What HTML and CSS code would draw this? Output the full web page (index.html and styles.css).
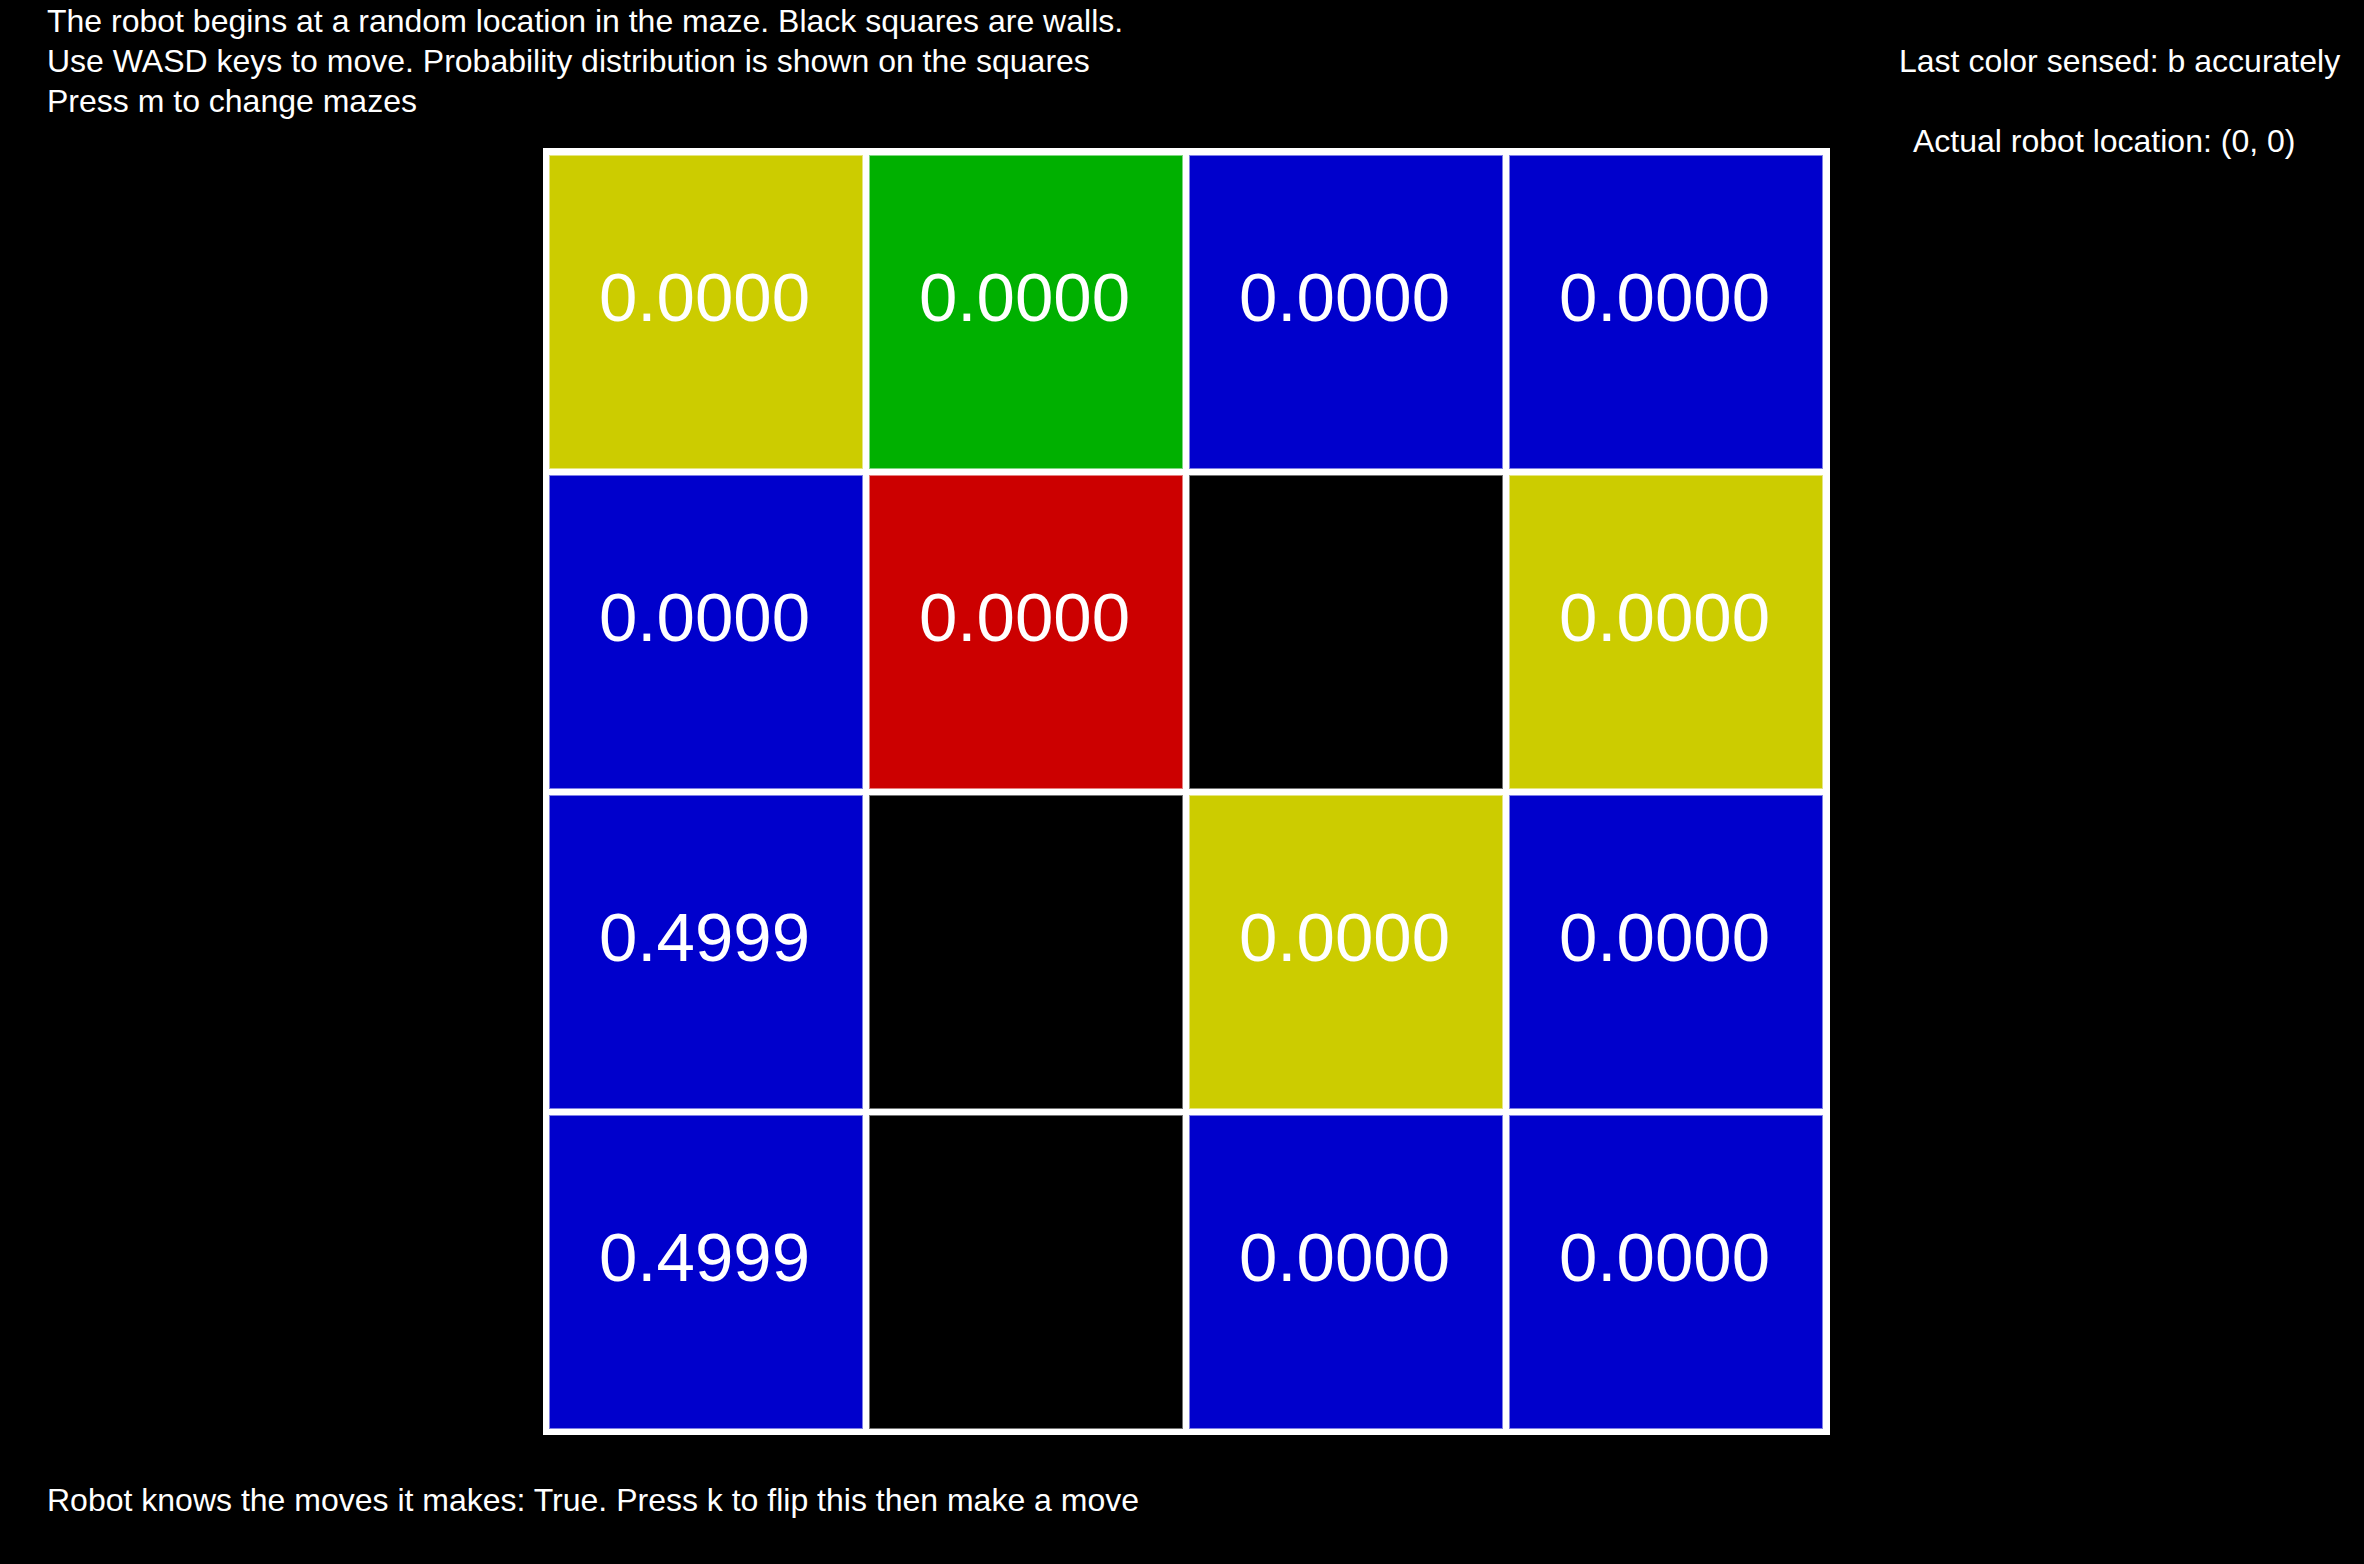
FILE: index.html
```html
<!DOCTYPE html>
<html>
<head>
<meta charset="utf-8">
<title>Maze Localization</title>
<link rel="stylesheet" href="styles.css">
</head>
<body>
<div class="page">
  <div class="main">
    <div class="intro">
      <div class="line">The robot begins at a random location in the maze. Black squares are walls.</div>
      <div class="line">Use WASD keys to move. Probability distribution is shown on the squares</div>
      <div class="line">Press m to change mazes</div>
    </div>
    <div class="maze">
      <div class="cell yellow"><span class="prob">0.0000</span></div>
      <div class="cell green"><span class="prob">0.0000</span></div>
      <div class="cell blue"><span class="prob">0.0000</span></div>
      <div class="cell blue"><span class="prob">0.0000</span></div>

      <div class="cell blue"><span class="prob">0.0000</span></div>
      <div class="cell red"><span class="prob">0.0000</span></div>
      <div class="cell wall"></div>
      <div class="cell yellow"><span class="prob">0.0000</span></div>

      <div class="cell blue"><span class="prob">0.4999</span></div>
      <div class="cell wall"></div>
      <div class="cell yellow"><span class="prob">0.0000</span></div>
      <div class="cell blue"><span class="prob">0.0000</span></div>

      <div class="cell blue"><span class="prob">0.4999</span></div>
      <div class="cell wall"></div>
      <div class="cell blue"><span class="prob">0.0000</span></div>
      <div class="cell blue"><span class="prob">0.0000</span></div>
    </div>
    <div class="footer">Robot knows the moves it makes: True. Press k to flip this then make a move</div>
  </div>
  <div class="info">
    <div class="line sensed">Last color sensed: b accurately</div>
    <div class="line location">Actual robot location: (0, 0)</div>
  </div>
</div>
</body>
</html>
```
FILE: styles.css
```css
html, body {
  margin: 0;
  padding: 0;
  background: #000;
}

body {
  color: #fff;
  font-family: "Liberation Sans", Arial, Helvetica, sans-serif;
  font-size: 32px;
  line-height: 40px;
}

.page {
  display: flex;
  width: 2364px;
  min-height: 1564px;
}

.main {
  flex: 1;
  display: flex;
  flex-direction: column;
}

.intro {
  padding: 1px 0 0 47px;
}

.line {
  white-space: nowrap;
}

.maze {
  margin: 27px 0 0 543px;
  width: 1274px;
  padding: 7px 7px 6px 6px;
  background: #fff;
  display: grid;
  grid-template-columns: repeat(4, 314px);
  grid-template-rows: repeat(4, 314px);
  gap: 6px;
}

.cell {
  display: flex;
  justify-content: center;
  align-items: flex-start;
  padding: 108px 3px 0 0;
  box-sizing: border-box;
  box-shadow: inset 0 0 0 1px rgba(255, 255, 255, 0.5);
}

.prob {
  font-family: "Liberation Sans", Arial, Helvetica, sans-serif;
  font-size: 69px;
  line-height: 69px;
  color: #fff;
}

.yellow { background: #cccc00; }
.green  { background: #00b000; }
.blue   { background: #0000cc; }
.red    { background: #cc0000; }
.wall   { background: #000; box-shadow: inset 0 0 0 1px rgba(255, 255, 255, 0.45); }

.footer {
  padding: 45px 0 0 47px;
  white-space: nowrap;
}

.info {
  width: 465px;
  padding-top: 41px;
  display: flex;
  flex-direction: column;
  gap: 40px;
}

.info .location {
  margin-left: 14px;
}
```
